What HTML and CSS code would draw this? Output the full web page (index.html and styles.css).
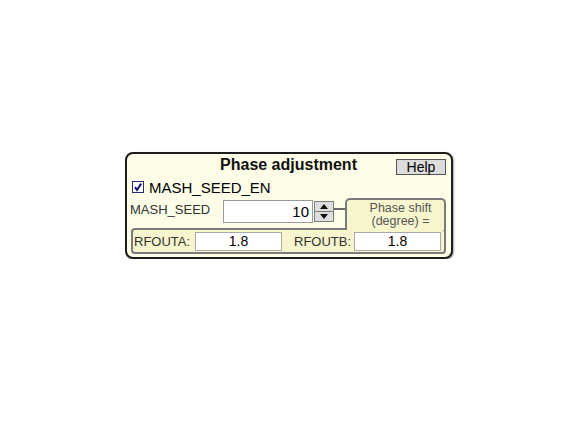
FILE: index.html
```html
<!DOCTYPE html>
<html>
<head>
<meta charset="utf-8">
<link rel="stylesheet" href="styles.css">
</head>
<body>
<div class="stage">
  <div class="panel">
    <div class="head">
      <span></span>
      <div class="title">Phase adjustment</div>
      <div class="help-wrap"><button class="help">Help</button></div>
    </div>
    <div class="check-row">
      <span class="checkbox">
        <svg width="12" height="12" viewBox="0 0 12 12"><rect x="0.5" y="0.5" width="11" height="11" fill="#fff" stroke="#2a2a6e"/><path d="M3 6.2 L5 9 L9.2 2.6" fill="none" stroke="#14147a" stroke-width="2"/></svg>
      </span>
      <span class="check-label">MASH_SEED_EN</span>
    </div>
    <div class="seed-row">
      <span class="seed-label">MASH_SEED</span>
      <div class="seed-input">10</div>
      <div class="spinner">
        <div class="spin-btn"><svg width="8" height="5" viewBox="0 0 8 5"><path d="M0 5 L4 0 L8 5 Z" fill="#111"/></svg></div>
        <div class="spin-btn"><svg width="8" height="5" viewBox="0 0 8 5"><path d="M0 0 L4 5 L8 0 Z" fill="#111"/></svg></div>
      </div>
      <div class="link-line"></div>
    </div>
    <div class="out-box">
      <span class="out-label">RFOUTA:</span>
      <div class="out-input">1.8</div>
      <span class="out-label out-label-b">RFOUTB:</span>
      <div class="out-input">1.8</div>
    </div>
    <div class="phase-box">
      <div class="phase-line">Phase shift</div>
      <div class="phase-line">(degree) =</div>
    </div>
  </div>
</div>
</body>
</html>
```

FILE: styles.css
```css
html, body {
  margin: 0;
  padding: 0;
  background: #ffffff;
}

.stage {
  padding: 152px 0 0 125px;
}

.panel {
  position: relative;
  box-sizing: border-box;
  width: 328px;
  height: 107px;
  border: 2px solid #1c1c1c;
  border-radius: 8px;
  background: #fdfde8;
  box-shadow: 1px 1px 2px rgba(0, 0, 0, 0.35);
  padding: 2px 5px 0 2px;
  font-family: "Liberation Sans", Arial, sans-serif;
  color: #000;
}

.head {
  display: grid;
  grid-template-columns: 1fr auto 1fr;
  height: 21px;
}

.title {
  font-weight: bold;
  font-size: 16px;
  line-height: 18px;
  color: #111;
  padding-left: 2px;
}

.help-wrap {
  display: flex;
  justify-content: flex-end;
  align-items: flex-start;
}

.help {
  box-sizing: border-box;
  width: 50px;
  height: 16px;
  margin-top: 3px;
  padding: 0;
  border: 1px solid #555;
  background: #dcdcdc;
  font-family: "Liberation Sans", Arial, sans-serif;
  font-size: 14px;
  line-height: 14px;
  color: #000;
}

.check-row {
  display: flex;
  align-items: center;
  height: 20px;
  padding-left: 3px;
}

.checkbox {
  display: flex;
  width: 12px;
  height: 12px;
}

.check-label {
  margin-left: 5px;
  font-size: 15px;
  line-height: 17px;
  color: #000;
}

.seed-row {
  display: flex;
  align-items: flex-start;
  height: 31px;
  padding-left: 1px;
}

.seed-label {
  width: 93px;
  margin-top: 5px;
  font-size: 13px;
  line-height: 15px;
  color: #333;
}

.seed-input {
  box-sizing: border-box;
  width: 90px;
  height: 23px;
  margin-top: 3px;
  border: 1px solid #9a9a9a;
  background: #fff;
  text-align: right;
  padding-right: 3px;
  font-size: 15px;
  line-height: 21px;
}

.spinner {
  display: flex;
  flex-direction: column;
  box-sizing: border-box;
  width: 20px;
  height: 21px;
  margin-top: 4px;
  margin-left: 1px;
  border: 1px solid #7d7d7d;
  background: #7d7d7d;
  gap: 1px;
}

.spin-btn {
  flex: 1;
  display: flex;
  align-items: center;
  justify-content: center;
  background: #dedede;
}

.link-line {
  width: 12px;
  height: 2px;
  margin-top: 11px;
  background: #6a6a6a;
}

.out-box {
  box-sizing: border-box;
  display: flex;
  align-items: center;
  height: 26px;
  margin-left: 2px;
  border: 2px solid #7a7a7a;
  border-radius: 4px;
  background: #f7f5cd;
  padding-left: 1px;
}

.out-label {
  width: 61px;
  font-size: 13px;
  line-height: 15px;
  color: #333;
}

.out-label-b {
  width: 60px;
  margin-left: 12px;
}

.out-input {
  box-sizing: border-box;
  width: 87px;
  height: 19px;
  border: 1px solid #a8a8a8;
  background: #fff;
  text-align: center;
  font-size: 14px;
  line-height: 17px;
}

.phase-box {
  position: absolute;
  left: 218px;
  top: 44px;
  box-sizing: border-box;
  width: 101px;
  height: 32px;
  border: 2px solid #7a7a7a;
  border-bottom: none;
  border-radius: 5px 5px 0 0;
  background: #f7f5cd;
  padding: 1px 0 0 10px;
}

.phase-line {
  text-align: center;
  font-size: 12.5px;
  line-height: 14px;
  height: 13px;
  color: #555;
}
```
